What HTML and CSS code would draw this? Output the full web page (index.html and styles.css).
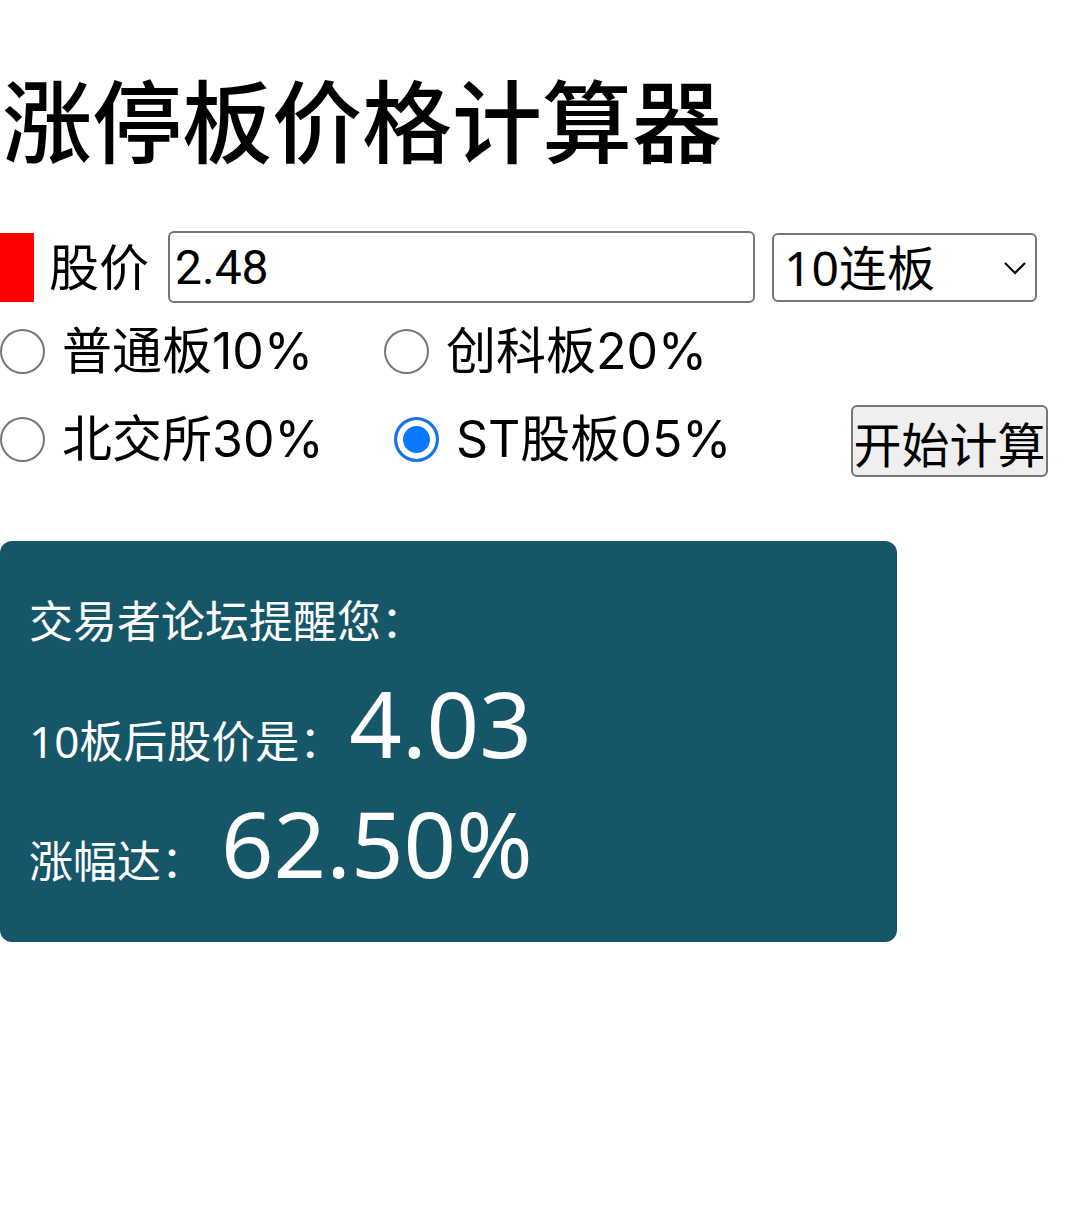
FILE: index.html
```html
<!DOCTYPE html>
<html lang="zh-CN">
<head>
<meta charset="utf-8">
<title>涨停板价格计算器</title>
<link rel="stylesheet" href="styles.css">
</head>
<body>
<h1 class="title">涨停板价格计算器</h1>
<div class="price-row">
  <span class="marker"></span>
  <span class="price-label">股价</span>
  <input class="price-input" type="text" value="2.48">
  <div class="select-wrap">
    <select class="days-select">
      <option>10连板</option>
    </select>
    <svg class="chevron" width="24" height="14" viewBox="0 0 24 14"><path d="M2 2 L12 12 L22 2" fill="none" stroke="#000" stroke-width="2"/></svg>
  </div>
</div>
<div class="radio-row radio-row-first">
  <label class="opt opt-a"><input type="radio" name="b"><span>普通板10%</span></label>
  <label class="opt"><input type="radio" name="b"><span>创科板20%</span></label>
</div>
<div class="radio-row">
  <label class="opt opt-b"><input type="radio" name="b"><span>北交所30%</span></label>
  <label class="opt opt-st"><input type="radio" name="b" checked><span>ST股板05%</span></label>
  <button class="calc-btn">开始计算</button>
</div>
<div class="card">
  <div class="notice">交易者论坛提醒您：</div>
  <div class="result"><span class="r-label">10板后股价是：</span><span class="r-value">4.03</span></div>
  <div class="result"><span class="r-label">涨幅达：</span><span class="r-value r-value-wide">62.50%</span></div>
</div>
</body>
</html>
```
FILE: styles.css
```css
html, body {
  margin: 0;
  padding: 0;
  background: #fff;
}
body {
  font-family: "Noto Sans", "Noto Sans CJK SC", sans-serif;
  color: #000;
}
.title {
  margin: 67px 0 0 2px;
  font-size: 90px;
  font-weight: 500;
  line-height: 108px;
}
.price-row {
  display: flex;
  align-items: center;
  margin-top: 56px;
  height: 72px;
}
.marker {
  width: 34px;
  height: 69px;
  background: #ff0000;
  flex: none;
}
.price-label {
  font-size: 50px;
  margin-left: 15px;
  width: 104px;
  line-height: 60px;
}
.price-input {
  box-sizing: border-box;
  width: 587px;
  height: 72px;
  border: 2px solid #767676;
  border-radius: 6px;
  font-family: Roboto, "Noto Sans CJK SC", sans-serif;
  font-size: 48px;
  padding: 0 5px;
  margin: 0 0 0 15px;
  color: #000;
}
.select-wrap {
  position: relative;
  margin-left: 17px;
}
.days-select {
  appearance: none;
  -webkit-appearance: none;
  box-sizing: border-box;
  width: 265px;
  height: 69px;
  border: 2px solid #767676;
  border-radius: 6px;
  background: #fff;
  font-family: inherit;
  font-size: 48px;
  padding: 0 10px;
  color: #000;
  display: block;
}
.chevron {
  position: absolute;
  right: 10px;
  top: 28px;
}
.radio-row {
  display: flex;
  align-items: center;
  height: 88px;
}
.radio-row-first {
  margin-top: 4px;
}
.opt {
  display: flex;
  align-items: center;
  font-family: Inter, "Noto Sans CJK SC", sans-serif;
  font-size: 50px;
  line-height: 60px;
}
.opt span {
  margin-left: 17px;
}
.opt input {
  appearance: none;
  -webkit-appearance: none;
  margin: 0;
  width: 45px;
  height: 45px;
  border: 2px solid #767676;
  border-radius: 50%;
  box-sizing: border-box;
  background: #fff;
  flex: none;
}
.opt input:checked {
  border: 3px solid #1a73e8;
  background: #0b79ff;
  box-shadow: inset 0 0 0 6px #fff;
}
.opt-a {
  width: 384px;
}
.opt-b {
  width: 394px;
}
.opt-st {
  width: 457px;
}
.calc-btn {
  box-sizing: border-box;
  height: 72px;
  width: 197px;
  border: 2px solid #767676;
  border-radius: 6px;
  background: #efefef;
  font-family: inherit;
  font-size: 48px;
  padding: 0;
  margin-top: 4px;
  color: #000;
}
.card {
  box-sizing: border-box;
  margin-top: 58px;
  width: 897px;
  height: 401px;
  background: #155668;
  border-radius: 12px;
  color: #fff;
  padding: 50px 0 0 29px;
}
.notice {
  font-size: 44px;
  line-height: 60px;
  margin-bottom: 12px;
}
.result {
  display: flex;
  align-items: baseline;
  height: 120px;
}
.r-label {
  font-size: 44px;
}
.r-value {
  font-size: 92px;
  line-height: 120px;
  margin-left: 6px;
}
.r-value-wide {
  margin-left: 16px;
}
```
